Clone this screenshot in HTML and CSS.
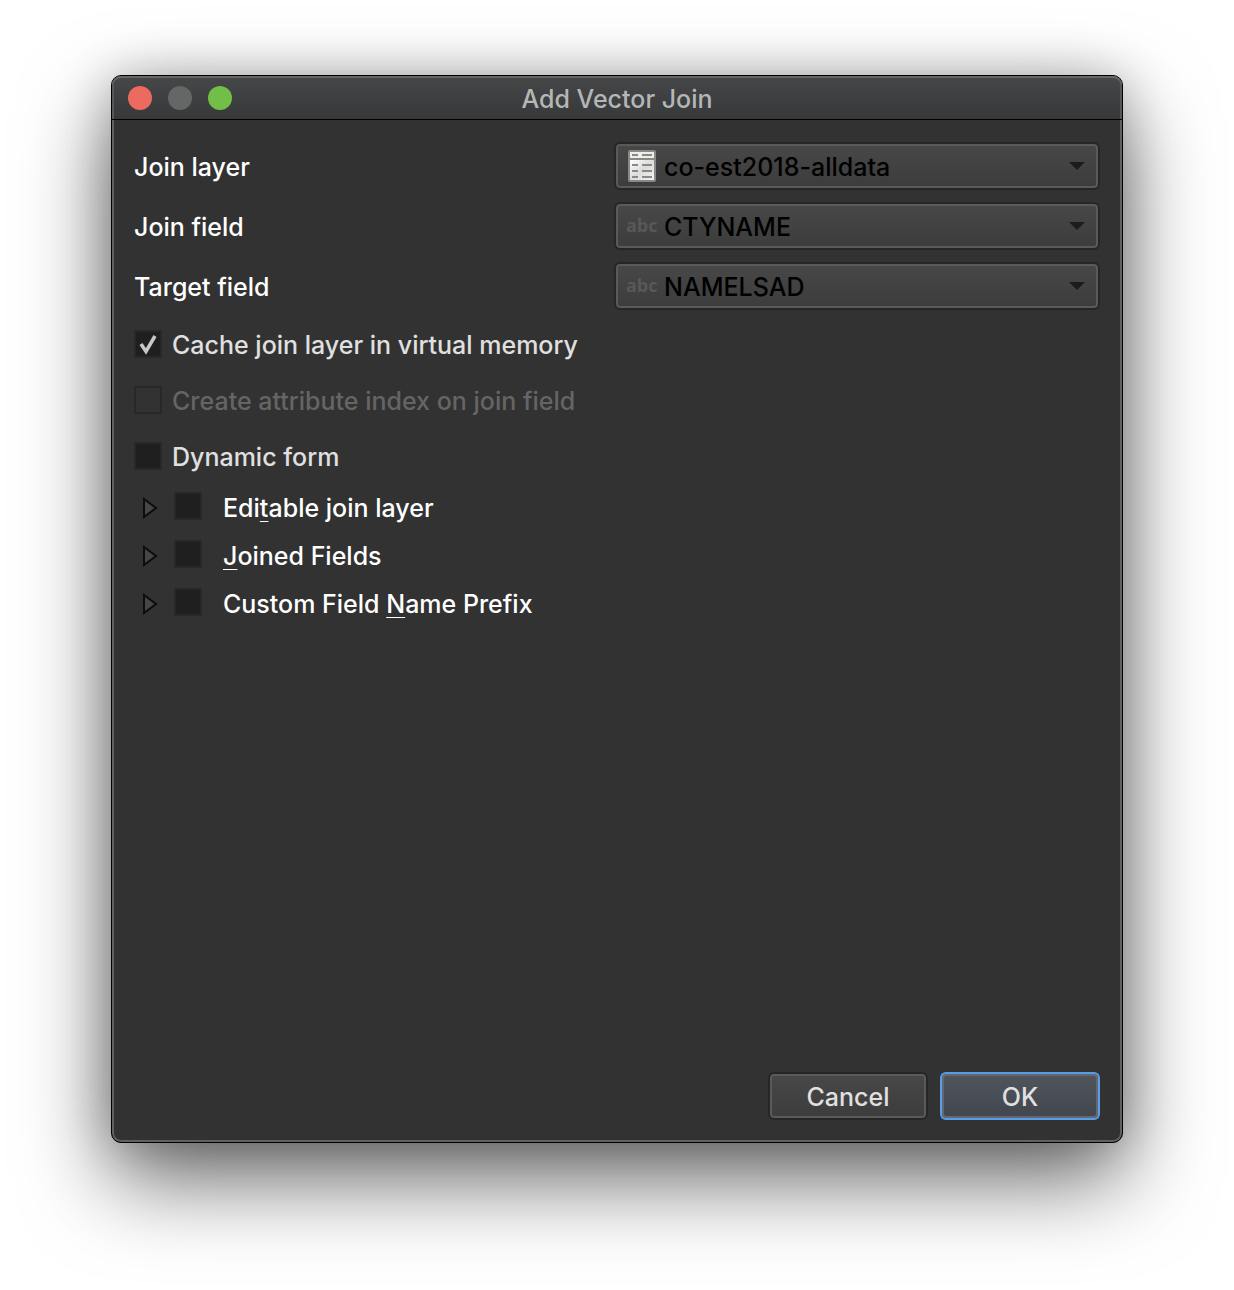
FILE: index.html
```html
<!DOCTYPE html>
<html lang="en">
<head>
<meta charset="utf-8">
<meta name="viewport" content="width=device-width, initial-scale=1">
<title>Add Vector Join</title>
<link rel="stylesheet" href="styles.css">
</head>
<body>
<main class="window">
  <header class="titlebar">
    <div class="lights">
      <button class="light close" type="button" aria-label="Close"></button>
      <button class="light minimize" type="button" aria-label="Minimize" disabled></button>
      <button class="light maximize" type="button" aria-label="Zoom"></button>
    </div>
    <h1 class="title">Add Vector Join</h1>
  </header>
  <form class="content">
    <div class="fields">
      <label for="join-layer">Join layer</label>
      <div class="combo">
        <select id="join-layer"><option>co-est2018-alldata</option></select>
        <svg class="table-icon" viewBox="0 0 28 32" aria-hidden="true">
          <defs><linearGradient id="sheet" x1="0" y1="0" x2="1" y2="1"><stop offset="0" stop-color="#fff"/><stop offset=".5" stop-color="#dcdcdc"/><stop offset="1" stop-color="#f2f2f2"/></linearGradient></defs>
          <rect width="28" height="32" rx="2" fill="#888a85"/>
          <rect x="2" y="2" width="24" height="6" fill="#eeeeec"/>
          <rect x="2" y="10" width="24" height="20" fill="url(#sheet)"/>
          <path d="M4 5h6M14 5h10M4 15h6M14 15h10M4 21h6M14 21h10M4 27h6M14 27h10" stroke="#888a85" stroke-width="2"/>
        </svg>
        <svg class="arrow" viewBox="0 0 16 8" aria-hidden="true"><path d="M0 0h16L8 8z" fill="#1c1c1c"/></svg>
      </div>
      <label for="join-field">Join field</label>
      <div class="combo">
        <select id="join-field"><option>CTYNAME</option></select>
        <span class="type" aria-hidden="true">abc</span>
        <svg class="arrow" viewBox="0 0 16 8" aria-hidden="true"><path d="M0 0h16L8 8z" fill="#1c1c1c"/></svg>
      </div>
      <label for="target-field">Target field</label>
      <div class="combo">
        <select id="target-field"><option>NAMELSAD</option></select>
        <span class="type" aria-hidden="true">abc</span>
        <svg class="arrow" viewBox="0 0 16 8" aria-hidden="true"><path d="M0 0h16L8 8z" fill="#1c1c1c"/></svg>
      </div>
    </div>
    <div class="options">
      <label class="option"><span class="check"><input class="box" type="checkbox" checked><svg class="tick" viewBox="0 0 28 28" aria-hidden="true"><path d="M7 14l5 7.500L21 6" fill="none" stroke="#c8c8c8" stroke-width="3.500"/></svg></span>Cache join layer in virtual memory</label>
      <label class="option disabled"><input class="box" type="checkbox" disabled>Create attribute index on join field</label>
      <label class="option"><input class="box" type="checkbox">Dynamic form</label>
    </div>
    <div class="groups">
      <div class="group">
        <button class="expander" type="button" aria-label="Expand Editable join layer"><svg viewBox="0 0 16 22" aria-hidden="true"><path d="M2 2l12 9L2 20z" fill="#464646" stroke="#0c0c0c" stroke-width="2"/></svg></button>
        <input class="box" type="checkbox" id="editable">
        <label for="editable">Edi<u>t</u>able join layer</label>
      </div>
      <div class="group">
        <button class="expander" type="button" aria-label="Expand Joined Fields"><svg viewBox="0 0 16 22" aria-hidden="true"><path d="M2 2l12 9L2 20z" fill="#464646" stroke="#0c0c0c" stroke-width="2"/></svg></button>
        <input class="box" type="checkbox" id="joined">
        <label for="joined"><u>J</u>oined Fields</label>
      </div>
      <div class="group">
        <button class="expander" type="button" aria-label="Expand Custom Field Name Prefix"><svg viewBox="0 0 16 22" aria-hidden="true"><path d="M2 2l12 9L2 20z" fill="#464646" stroke="#0c0c0c" stroke-width="2"/></svg></button>
        <input class="box" type="checkbox" id="prefix">
        <label for="prefix">Custom Field <u>N</u>ame Prefix</label>
      </div>
    </div>
    <div class="actions">
      <button class="button" type="button">Cancel</button>
      <button class="button primary" type="submit">OK</button>
    </div>
  </form>
</main>
</body>
</html>
```
FILE: styles.css
```css
* { box-sizing: border-box; }

body {
  margin: 0;
  min-height: 100vh;
  padding: 75px 111px 147px;
  display: flex;
  background: #fff;
  color: #fff;
  font: 500 25px/32px Inter, "Liberation Sans", sans-serif;
}

button, select { font: inherit; }

.window {
  flex: 1;
  display: flex;
  flex-direction: column;
  border: 1px solid #000;
  border-radius: 10px;
  background: #323232;
  box-shadow: inset 0 0 0 2px #616161, 0 36px 88px rgba(0, 0, 0, .6), 0 0 48px rgba(0, 0, 0, .2);
}

.titlebar {
  display: grid;
  grid-template-columns: 1fr auto 1fr;
  align-items: center;
  height: 44px;
  padding: 0 16px;
  border-bottom: 1px solid #000;
  border-radius: 9px 9px 0 0;
  background: linear-gradient(#464748, #373839);
  box-shadow: inset 0 2px #666768, inset 2px 0 #565758, inset -2px 0 #565758;
}

.lights { display: flex; gap: 16px; }

.light {
  width: 24px;
  height: 24px;
  padding: 0;
  border: 0;
  border-radius: 50%;
}

.close { background: #ed6a5e; }
.minimize { background: #656666; }
.maximize { background: #72be47; }

.title {
  grid-column: 2;
  margin: 0;
  padding-top: 2px;
  color: #b5b6b6;
  font-size: 25px;
  font-weight: 500;
}

.content {
  flex: 1;
  display: flex;
  flex-direction: column;
  padding: 22px;
}

.fields {
  display: grid;
  grid-template-columns: 80fr 81fr;
  gap: 12px 0;
  align-items: center;
}

.fields label { padding-top: 2px; }

.combo { position: relative; }

.combo select {
  display: block;
  width: 100%;
  height: 48px;
  padding: 2px 48px 0;
  appearance: none;
  border: 2px solid #262626;
  border-radius: 6px;
  background: linear-gradient(#484848, #3c3c3c);
  box-shadow: inset 0 0 0 2px #5a5a5a;
  color: #000;
}

.table-icon {
  position: absolute;
  left: 14px;
  top: 8px;
  width: 28px;
  height: 32px;
  pointer-events: none;
}

.type {
  position: absolute;
  left: 12px;
  top: 7px;
  color: #585858;
  font: 700 18px/32px "Open Sans", "Noto Sans", sans-serif;
  pointer-events: none;
}

.arrow {
  position: absolute;
  right: 15px;
  top: 20px;
  width: 16px;
  height: 8px;
  pointer-events: none;
}

.options {
  display: grid;
  gap: 26px;
  margin-top: 20px;
  color: #e0e0e0;
  line-height: 30px;
}

.option {
  display: flex;
  align-items: flex-start;
  gap: 10px;
}

.disabled { color: #656565; }

.check {
  display: flex;
  position: relative;
}

.tick {
  position: absolute;
  inset: 0;
  width: 28px;
  height: 28px;
  pointer-events: none;
}

.box {
  appearance: none;
  flex: none;
  width: 28px;
  height: 28px;
  margin: 0;
  border: 2px solid #282828;
  background: #1f1f1f;
}

.box:disabled { background: none; }

.groups {
  display: grid;
  gap: 16px;
  margin-top: 20px;
}

.group {
  display: flex;
  align-items: flex-start;
}

.expander {
  display: flex;
  align-self: center;
  width: 40px;
  padding: 0 0 0 8px;
  border: 0;
  background: none;
}

.expander svg { width: 16px; height: 22px; }

.group label { padding-left: 21px; }

u {
  text-decoration-thickness: 1px;
  text-underline-offset: 4px;
  text-decoration-skip-ink: none;
}

.actions {
  display: flex;
  justify-content: flex-end;
  gap: 12px;
  margin-top: auto;
}

.button {
  width: 160px;
  height: 48px;
  padding: 2px 0 0;
  border: 2px solid #262626;
  border-radius: 6px;
  background: linear-gradient(#484848, #3c3c3c);
  box-shadow: inset 0 0 0 2px #5a5a5a;
  color: #e0e0e0;
}

.primary {
  border-color: #5a9cec;
  background: linear-gradient(#50545d, #42464e);
  box-shadow: inset 0 0 0 2px #63676e;
}
```
